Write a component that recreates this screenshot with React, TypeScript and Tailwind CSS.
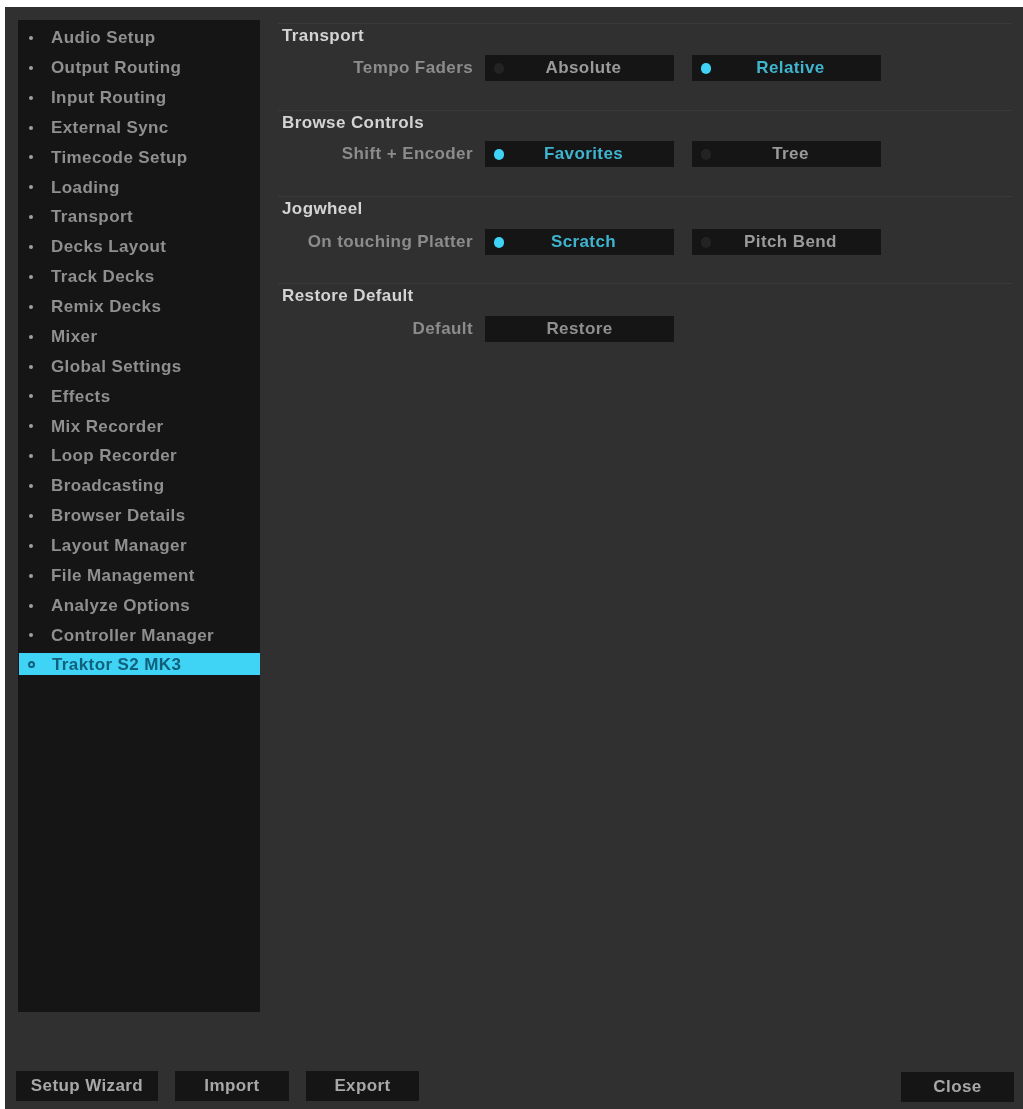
const items = ["Audio Setup","Output Routing","Input Routing","External Sync","Timecode Setup","Loading","Transport","Decks Layout","Track Decks","Remix Decks","Mixer","Global Settings","Effects","Mix Recorder","Loop Recorder","Broadcasting","Browser Details","Layout Manager","File Management","Analyze Options","Controller Manager"];

function Toggle({ label, on }: { label: string; on: boolean }) {
  return (
    <div className="relative flex h-[26px] w-[189px] items-center justify-center bg-[#151515] pl-[8px]">
      <span className={on ? "absolute left-[9px] h-[11px] w-[10px] rounded-full bg-[#3fd4f5]" : "absolute left-[9px] h-[11px] w-[10px] rounded-full bg-[#232323]"} />
      <span className={on ? "text-[#3fb4cf]" : "text-[#9a9a9a]"}>{label}</span>
    </div>
  );
}

function Section({ title, label, children, h, rowMt }: { title: string; label: string; children: React.ReactNode; h: string; rowMt: string }) {
  return (
    <section className={`${h} border-t border-[#3a3a3a]`}>
      <h2 className="h-[22px] pl-[4px] pt-[1px] font-bold leading-[22px] text-[#d4d4d4]">{title}</h2>
      <div className={`${rowMt} flex items-center`}>
        <div className="w-[195px] text-right text-[#8c8c8c]">{label}</div>
        <div className="ml-[12px] flex gap-[18px]">{children}</div>
      </div>
    </section>
  );
}

export default function App() {
  return (
    <div className="h-[1109px] w-[1023px] overflow-hidden bg-white pl-[5px] pt-[7px] text-[17px] font-bold tracking-[0.4px] [font-family:'Liberation_Sans',Arial,sans-serif]">
      <div className="flex h-[1102px] w-[1018px] flex-col bg-[#303030] blur-[0.5px]">
        <div className="flex h-[1064px] pl-[13px] pt-[13px]">
          <nav className="h-[992px] w-[242px] bg-[#151515] pt-[3px]">
            <ul>
              {items.map((t) => (
                <li key={t} className="flex h-[29.88px] items-center text-[#8f8f8f]">
                  <span className="ml-[11px] mr-[18px] h-[4px] w-[4px] rounded-full bg-[#a0a0a0]" />
                  {t}
                </li>
              ))}
              <li className="ml-[1px] mt-[2.5px] flex h-[22px] items-center bg-[#3fd4f5] pt-[1px] text-[#10607c]">
                <span className="ml-[9px] mr-[17px] h-[7px] w-[7px] rounded-full border-2 border-[#10607c]" />
                Traktor S2 MK3
              </li>
            </ul>
          </nav>
          <main className="ml-[18px] w-[734px] pt-[3px]">
            <Section h="h-[87px]" rowMt="mt-[9px]" title="Transport" label="Tempo Faders">
              <Toggle label="Absolute" on={false} />
              <Toggle label="Relative" on />
            </Section>
            <Section h="h-[86px]" rowMt="mt-[8px]" title="Browse Controls" label="Shift + Encoder">
              <Toggle label="Favorites" on />
              <Toggle label="Tree" on={false} />
            </Section>
            <Section h="h-[87px]" rowMt="mt-[10px]" title="Jogwheel" label="On touching Platter">
              <Toggle label="Scratch" on />
              <Toggle label="Pitch Bend" on={false} />
            </Section>
            <Section h="h-[87px]" rowMt="mt-[10px]" title="Restore Default" label="Default">
              <div className="flex h-[26px] w-[189px] items-center justify-center bg-[#151515] text-[#8f8f8f]">Restore</div>
            </Section>
          </main>
        </div>
        <footer className="flex pl-[11px] text-[#a8a8a8]">
          <button className="h-[30px] w-[142px] bg-[#151515]">Setup Wizard</button>
          <button className="ml-[17px] h-[30px] w-[114px] bg-[#151515]">Import</button>
          <button className="ml-[17px] h-[30px] w-[113px] bg-[#151515]">Export</button>
          <button className="ml-[482px] mt-[1px] h-[30px] w-[113px] bg-[#151515]">Close</button>
        </footer>
      </div>
    </div>
  );
}
